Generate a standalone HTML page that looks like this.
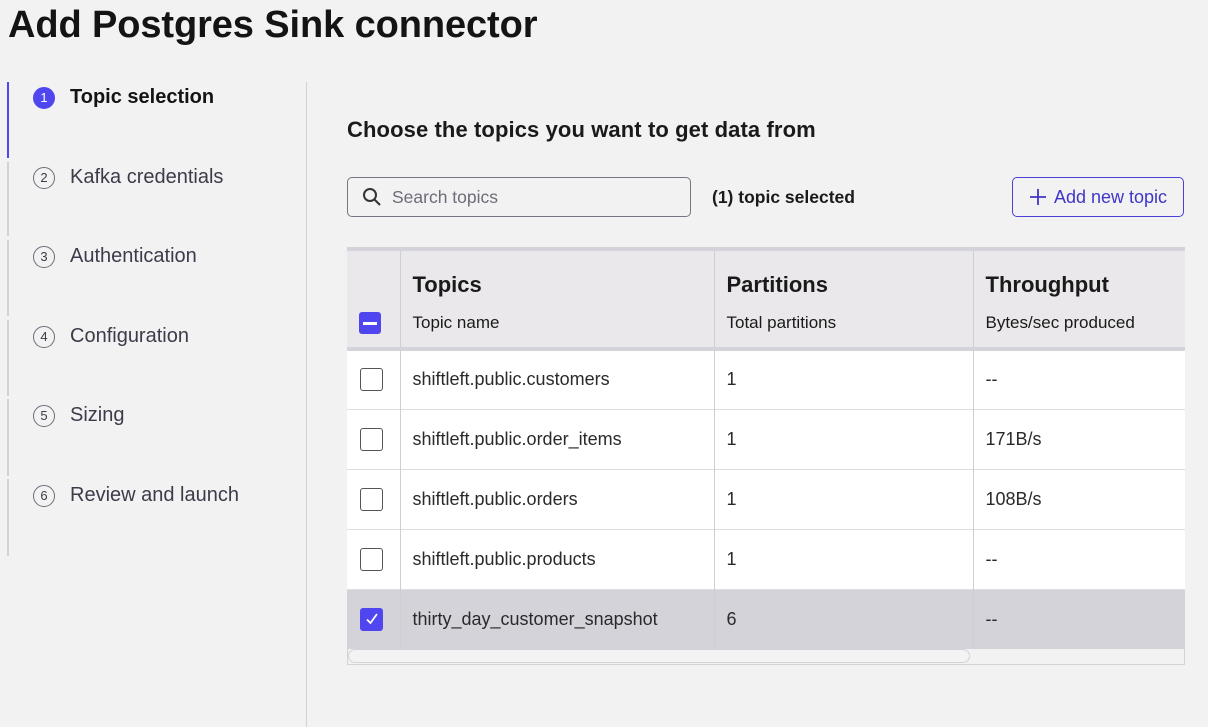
<!DOCTYPE html>
<html><head><style>
*{box-sizing:border-box;margin:0;padding:0}
body{width:1208px;height:727px;background:#f2f2f2;font-family:"Liberation Sans",sans-serif;color:#1a1a1a;position:relative;overflow:hidden}
.abs{position:absolute}
h1{position:absolute;left:8px;top:4px;font-size:38px;font-weight:bold;letter-spacing:-0.1px;color:#141414}
.seg{position:absolute;left:7px;width:2px;background:#d2d1d8}
.step{position:absolute;left:33px;display:flex;align-items:center;font-size:20px;color:#3d3b49}
.circ{width:22px;height:22px;border-radius:50%;border:1.5px solid #6e6c7a;font-size:13px;display:flex;align-items:center;justify-content:center;margin-right:15px;color:#3d3b49}
table{position:absolute;left:347px;top:247px;width:838px;border-collapse:collapse;font-size:18px}
td,th{border-right:1px solid #cfced3;text-align:left;font-weight:normal;padding:0 12px;vertical-align:middle}
td:last-child,th:last-child{border-right:none}
tbody td{height:60px;background:#fff;border-top:1px solid #dedde2;color:#2a2a2a}
tbody tr:first-child td{border-top:none}
tr.sel td{background:#d4d3da}
.cb{width:23px;height:23px;border:1.5px solid #555;border-radius:3px;background:#fff;margin-left:1px}
</style></head><body>
<h1>Add Postgres Sink connector</h1>
<div class="seg" style="top:82px;height:76px;background:#5046f0"></div>
<div class="seg" style="top:162px;height:74px"></div>
<div class="seg" style="top:240px;height:76px"></div>
<div class="seg" style="top:320px;height:76px"></div>
<div class="seg" style="top:399px;height:77px"></div>
<div class="seg" style="top:479px;height:77px"></div>
<div class="abs" style="left:306px;top:82px;width:1px;height:645px;background:#d2d1d8"></div>
<div class="step" style="top:86px;font-weight:bold;color:#141414"><div class="circ" style="background:#5046f0;border-color:#5046f0;color:#fff;font-weight:normal">1</div>Topic selection</div>
<div class="step" style="top:166px"><div class="circ">2</div>Kafka credentials</div>
<div class="step" style="top:245px"><div class="circ">3</div>Authentication</div>
<div class="step" style="top:325px"><div class="circ">4</div>Configuration</div>
<div class="step" style="top:404px"><div class="circ">5</div>Sizing</div>
<div class="step" style="top:484px"><div class="circ">6</div>Review and launch</div>

<div class="abs" style="left:347px;top:117px;font-size:22px;font-weight:bold;color:#1a1a1a;letter-spacing:0.1px">Choose the topics you want to get data from</div>
<div class="abs" style="left:347px;top:177px;width:344px;height:40px;border:1px solid #77757f;border-radius:5px;display:flex;align-items:center;padding-left:14px;font-size:17.5px;color:#6e6c78">
<svg width="20" height="20" viewBox="0 0 20 20" style="margin-right:10px"><circle cx="8" cy="8" r="6" fill="none" stroke="#333" stroke-width="2"/><path d="M12.5 12.5L18 18" stroke="#333" stroke-width="2"/></svg>Search topics</div>
<div class="abs" style="left:712px;top:187px;font-size:17.5px;font-weight:bold">(1) topic selected</div>
<div class="abs" style="left:1012px;top:177px;width:172px;height:40px;border:1.5px solid #4a40d8;border-radius:5px;display:flex;align-items:center;justify-content:center;font-size:18px;color:#3f36c8">
<svg width="18" height="18" viewBox="0 0 18 18" style="margin-right:7px"><path d="M9 1V17M1 9H17" stroke="#3f36c8" stroke-width="1.8"/></svg>Add new topic</div>

<table>
<thead><tr style="background:#eae8ea;border-top:4px solid #d4d3da;border-bottom:4px solid #d4d3da">
<th style="width:53px;height:100px;padding:0 0 0 12px;vertical-align:bottom;padding-bottom:13px"><div style="width:22px;height:22px;background:#5046f0;border-radius:3px;display:flex;align-items:center;justify-content:center"><div style="width:14px;height:3px;background:#fff"></div></div></th>
<th style="width:314px"><div style="font-size:22px;font-weight:bold;margin-top:7px">Topics</div><div style="font-size:17px;margin-top:15px">Topic name</div></th>
<th style="width:259px"><div style="font-size:22px;font-weight:bold;margin-top:7px">Partitions</div><div style="font-size:17px;margin-top:15px">Total partitions</div></th>
<th><div style="font-size:22px;font-weight:bold;margin-top:7px">Throughput</div><div style="font-size:17px;margin-top:15px">Bytes/sec produced</div></th>
</tr></thead>
<tbody>
<tr><td><div class="cb"></div></td><td>shiftleft.public.customers</td><td>1</td><td>--</td></tr>
<tr><td><div class="cb"></div></td><td>shiftleft.public.order_items</td><td>1</td><td>171B/s</td></tr>
<tr><td><div class="cb"></div></td><td>shiftleft.public.orders</td><td>1</td><td>108B/s</td></tr>
<tr><td><div class="cb"></div></td><td>shiftleft.public.products</td><td>1</td><td>--</td></tr>
<tr class="sel"><td><div class="cb" style="background:#5046f0;border-color:#5046f0;display:flex;align-items:center;justify-content:center"><svg width="14" height="14" viewBox="0 0 14 14"><path d="M2 7.5L5.5 11L12 2" fill="none" stroke="#fff" stroke-width="1.8"/></svg></div></td><td>thirty_day_customer_snapshot</td><td>6</td><td>--</td></tr>
</tbody></table>
<div class="abs" style="left:347px;top:649px;width:838px;height:16px;background:#f2f2f2;border:1px solid #d4d3da;border-top:none"></div>
<div class="abs" style="left:348px;top:649px;width:622px;height:14px;border:1.5px solid #d4d3da;border-radius:7px;background:#f3f3f3"></div>
</body></html>
